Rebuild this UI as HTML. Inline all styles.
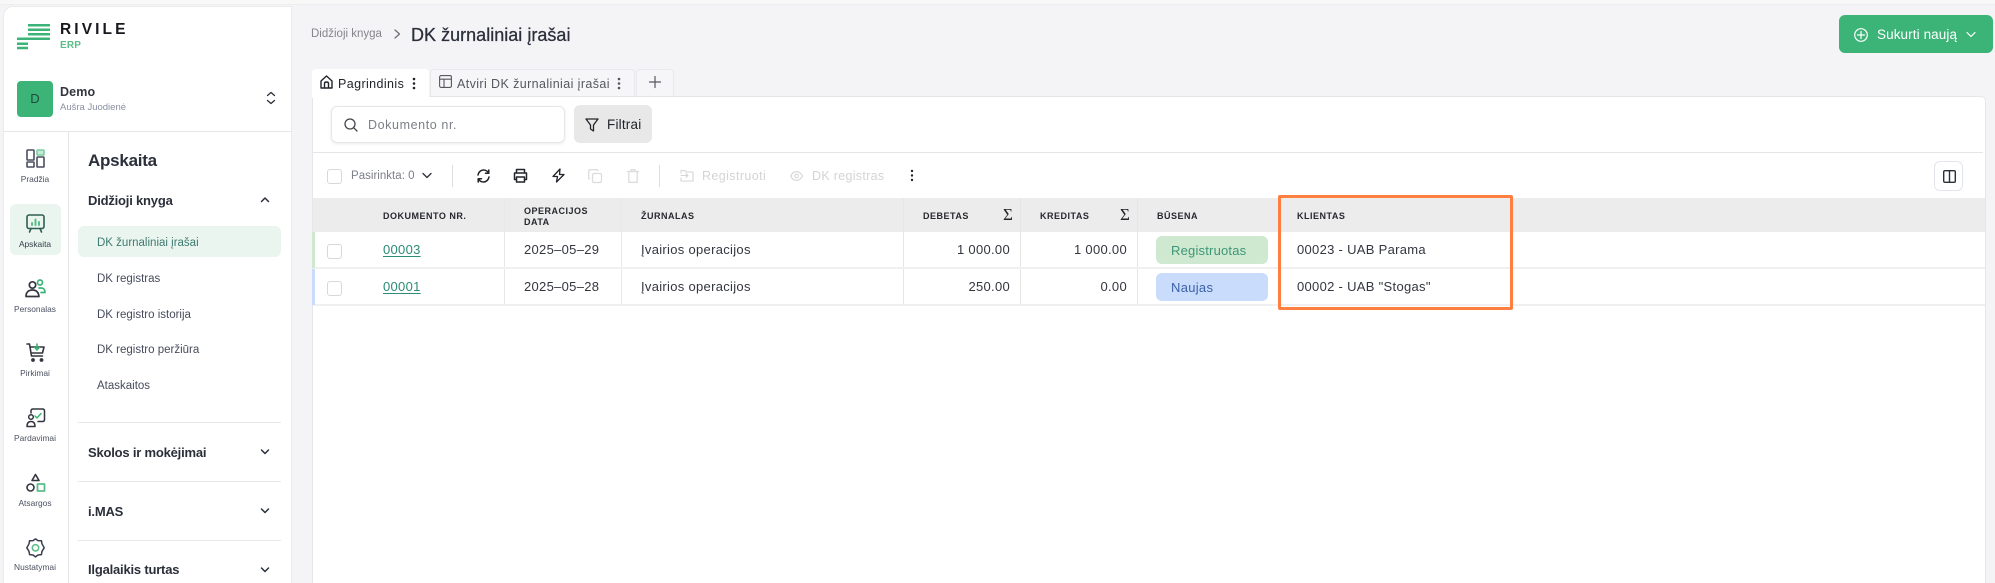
<!DOCTYPE html>
<html lang="lt"><head><meta charset="utf-8"><title>DK žurnaliniai įrašai</title>
<style>
html,body{margin:0;padding:0;width:1995px;height:583px;overflow:hidden;background:#f4f4f6}
body{position:relative;font-family:"Liberation Sans",sans-serif;color:#2b2f3a}
.b{position:absolute;box-sizing:border-box}
.t{position:absolute;white-space:nowrap;line-height:20px;height:20px;margin-top:-10px}
.c{transform:translateX(-50%);text-align:center}
.n{font-size:8.400px;color:#4b5060;margin-top:-9.500px}
.h{font-size:9px;font-weight:bold;letter-spacing:.5px;color:#26282e}
.m{font-size:13px;font-weight:bold;color:#2b2f3a;letter-spacing:-.2px}
.s{font-size:11.500px;color:#474b5c;letter-spacing:0}
.d{font-size:13px;color:#33363f;letter-spacing:.3px}
svg{position:absolute;overflow:visible;fill:none;stroke-linecap:round;stroke-linejoin:round}
</style></head><body>

<div class="b" style="left:0;top:0;width:1995px;height:5px;background:#f8f8f8;border-bottom:1px solid #eeeeee"></div>

<!-- sidebar -->
<div class="b" style="left:3px;top:6px;width:289px;height:590px;background:#fff;border:1px solid #ebebee;border-radius:10px 0 0 0"></div>
<div class="b" style="left:3px;top:131px;width:288px;height:1px;background:#e6e6e8"></div>
<div class="b" style="left:68px;top:131px;width:1px;height:452px;background:#e6e6e8"></div>

<!-- logo -->
<svg style="left:0;top:0;stroke-linecap:butt" width="60" height="60" stroke="#3cb478" stroke-width="2.500">
<path d="M28 25.200H50M28 29.800H50M28 34.300H50M17 38.800H50M17 43.700H28M17 48H28"/></svg>
<div class="t" style="left:60px;top:30px;font-size:15.500px;font-weight:bold;letter-spacing:3.100px;color:#17181c">RIVILE</div>
<div class="t" style="left:60px;top:46px;font-size:10px;font-weight:bold;letter-spacing:.2px;color:#5bbd8a">ERP</div>

<!-- org -->
<div class="b" style="left:17px;top:81px;width:36px;height:36px;background:#3cb478;border-radius:4px"></div>
<div class="t c" style="left:35px;top:99px;font-size:13px;color:#1f4a3c">D</div>
<div class="t" style="left:60px;top:92px;font-size:12.500px;font-weight:bold;letter-spacing:.15px;color:#33363f">Demo</div>
<div class="t" style="left:60px;top:108px;font-size:9.500px;color:#8a8fa3">Aušra Juodienė</div>
<svg style="left:265px;top:91px" width="12" height="14" stroke="#2b2f3a" stroke-width="1.300"><path d="M2.500 4.500L6 1.500L9.500 4.500M2.500 9.500L6 12.500L9.500 9.500"/></svg>

<!-- left rail -->
<div class="b" style="left:10px;top:204px;width:51px;height:51px;background:#eaf5ef;border-radius:6px"></div>
<svg style="left:26px;top:149px" width="19" height="19" stroke="#4a4e5e" stroke-width="1.600">
<rect x="1" y="1" width="7" height="10" rx=".8"/><rect x="1" y="13" width="7" height="5" rx=".8"/><rect x="11" y="8" width="7" height="10" rx=".8"/><rect x="11" y="1" width="7" height="5" rx=".8" stroke="#7bcf9f" fill="#c8ebd7"/></svg>
<div class="t c n" style="left:35px;top:178px">Pradžia</div>
<svg style="left:26px;top:214px" width="19" height="19" stroke="#2f5f52" stroke-width="1.600">
<rect x="1" y="1" width="17" height="13.500" rx="2"/><path d="M5 14.500L3.500 18M14 14.500L15.500 18"/><path d="M6 11V9M9.500 11V5.500M13 11V8" stroke="#5bbd8a" stroke-width="2"/></svg>
<div class="t c n" style="left:35px;top:243px;color:#33404a">Apskaita</div>
<svg style="left:25px;top:279px" width="21" height="19" stroke="#33363f" stroke-width="1.700">
<circle cx="7.500" cy="6" r="3.200"/><path d="M1 17.500C1 13 4 11 7.500 11S13.500 13 14 17.500Z"/><circle cx="15" cy="3.500" r="2.500" stroke="#3cb478"/><path d="M14 9H16.500C18.500 9 20 10.500 20 13.500H16" stroke="#3cb478"/></svg>
<div class="t c n" style="left:35px;top:308px">Personalas</div>
<svg style="left:26px;top:343px" width="20" height="19" stroke="#33363f" stroke-width="1.600">
<path d="M1 1H3.500L5.500 13H16.500M4 4H18L16.500 10H5"/><circle cx="7" cy="17" r="1.100" fill="#33363f"/><circle cx="15.500" cy="17" r="1.100" fill="#33363f"/><path d="M11 1V6.500M8.800 4.500L11 7L13.200 4.500" stroke="#3cb478"/></svg>
<div class="t c n" style="left:35px;top:372px">Pirkimai</div>
<svg style="left:26px;top:408px" width="20" height="20" stroke="#33363f" stroke-width="1.500">
<path d="M5 5V3C5 1.800 5.800 1 7 1H16.500C17.700 1 18.500 1.800 18.500 3V11.500C18.500 12.700 17.700 13.500 16.500 13.500H12"/><circle cx="5" cy="9" r="2.300"/><path d="M1 18.500C1 15 2.500 13.500 5 13.500S9 15 9 18.500Z"/><path d="M9 8L11 10L15 5.500" stroke="#3cb478"/></svg>
<div class="t c n" style="left:35px;top:437px">Pardavimai</div>
<svg style="left:26px;top:473px" width="20" height="20" stroke="#33363f" stroke-width="1.600">
<path d="M9.500 1.500L13 7.500H6Z"/><circle cx="4.500" cy="14.500" r="3.500"/><rect x="11.500" y="11" width="7" height="7" stroke="#5bbd8a" stroke-width="1.800"/></svg>
<div class="t c n" style="left:35px;top:502px">Atsargos</div>
<svg style="left:26px;top:538px" width="19" height="20" stroke="#3a3e4c" stroke-width="1.500">
<path d="M9.500 .9L12 2.600L15.400 2.700L16 5.800L18.200 9.800L16 13.300L15.400 16.600L12 17L9.500 18.900L7 17L3.600 16.600L3 13.300L.8 9.800L3 5.800L3.600 2.700L7 2.600Z"/><circle cx="9.500" cy="9.800" r="3.200" stroke="#5bbd8a"/></svg>
<div class="t c n" style="left:35px;top:566px">Nustatymai</div>

<!-- nav -->
<div class="t" style="left:88px;top:161px;font-size:17px;font-weight:bold;letter-spacing:-.25px;color:#2b2f3a">Apskaita</div>
<div class="t m" style="left:88px;top:201px">Didžioji knyga</div>
<svg style="left:260px;top:196px" width="10" height="8" stroke="#2b2f3a" stroke-width="1.500"><path d="M1.500 5.500L5 2L8.500 5.500"/></svg>
<div class="b" style="left:78px;top:226px;width:203px;height:31px;background:#eaf5ef;border-radius:6px"></div>
<div class="t s" style="left:97px;top:243px;color:#3f7a70">DK žurnaliniai įrašai</div>
<div class="t s" style="left:97px;top:279px">DK registras</div>
<div class="t s" style="left:97px;top:315px">DK registro istorija</div>
<div class="t s" style="left:97px;top:350px">DK registro peržiūra</div>
<div class="t s" style="left:97px;top:386px">Ataskaitos</div>
<div class="b" style="left:78px;top:422px;width:203px;height:1px;background:#e8e8ea"></div>
<div class="t m" style="left:88px;top:453px">Skolos ir mokėjimai</div>
<svg style="left:260px;top:448px" width="10" height="8" stroke="#2b2f3a" stroke-width="1.500"><path d="M1.500 2L5 5.500L8.500 2"/></svg>
<div class="b" style="left:78px;top:481px;width:203px;height:1px;background:#e8e8ea"></div>
<div class="t m" style="left:88px;top:512px">i.MAS</div>
<svg style="left:260px;top:507px" width="10" height="8" stroke="#2b2f3a" stroke-width="1.500"><path d="M1.500 2L5 5.500L8.500 2"/></svg>
<div class="b" style="left:78px;top:540px;width:203px;height:1px;background:#e8e8ea"></div>
<div class="t m" style="left:88px;top:570px">Ilgalaikis turtas</div>
<svg style="left:260px;top:566px" width="10" height="8" stroke="#2b2f3a" stroke-width="1.500"><path d="M1.500 2L5 5.500L8.500 2"/></svg>

<!-- header -->
<div class="t" style="left:311px;top:34px;font-size:11.500px;letter-spacing:0;color:#85868c">Didžioji knyga</div>
<svg style="left:393px;top:28px" width="9" height="12" stroke="#6f7076" stroke-width="1.300"><path d="M2 2L6.500 6L2 10"/></svg>
<div class="t" style="left:411px;top:35px;font-size:18px;letter-spacing:.02px;color:#2b2f3a;-webkit-text-stroke:.25px #2b2f3a">DK žurnaliniai įrašai</div>

<div class="b" style="left:1839px;top:15px;width:154px;height:38px;background:#3cb478;border-radius:6px"></div>
<svg style="left:1854px;top:28px" width="14" height="14" stroke="#fff" stroke-width="1.200"><circle cx="7" cy="7" r="6.300"/><path d="M7 3.500V10.500M3.500 7H10.500"/></svg>
<div class="t" style="left:1877px;top:35px;font-size:13.500px;letter-spacing:.1px;color:#fff">Sukurti naują</div>
<svg style="left:1966px;top:31px" width="10" height="8" stroke="#fff" stroke-width="1.200"><path d="M1 1.500L5 5.500L9 1.500"/></svg>

<!-- tabs -->
<div class="b" style="left:430px;top:69px;width:205px;height:28px;background:#f6f6f8;border:1px solid #e9e9ed;border-bottom:0;border-radius:4px 4px 0 0"></div>
<div class="b" style="left:636px;top:69px;width:38px;height:28px;background:#f6f6f8;border:1px solid #e9e9ed;border-bottom:0;border-radius:4px 4px 0 0"></div>

<!-- panel -->
<div class="b" style="left:312px;top:96px;width:1674px;height:490px;background:#fff;border:1px solid #e6e6ea;border-radius:0 5px 0 0"></div>
<div class="b" style="left:312px;top:69px;width:117px;height:29px;background:#fff;border-radius:4px 4px 0 0"></div>

<svg style="left:320px;top:75px" width="13" height="14" stroke="#22242a" stroke-width="1.400"><path d="M1 6L6.500 1L12 6V13H1ZM4.500 13V8.500C4.500 7.500 5.300 7 6.500 7S8.500 7.500 8.500 8.500V13"/></svg>
<div class="t" style="left:338px;top:84px;font-size:12.500px;letter-spacing:.4px;color:#22242a">Pagrindinis</div>
<svg style="left:412px;top:77px" width="4" height="13"><circle cx="2" cy="2" r="1.300" fill="#22242a"/><circle cx="2" cy="6.500" r="1.300" fill="#22242a"/><circle cx="2" cy="11" r="1.300" fill="#22242a"/></svg>
<svg style="left:439px;top:75px" width="13" height="13" stroke="#55585f" stroke-width="1.100"><rect x=".6" y=".6" width="11.800" height="11.800" rx="1.500"/><path d="M.6 4.200H12.400M5 4.200V12.400"/></svg>
<div class="t" style="left:457px;top:84px;font-size:12.500px;letter-spacing:.4px;color:#55585f">Atviri DK žurnaliniai įrašai</div>
<svg style="left:617px;top:77px" width="4" height="13"><circle cx="2" cy="2" r="1.300" fill="#55585f"/><circle cx="2" cy="6.500" r="1.300" fill="#55585f"/><circle cx="2" cy="11" r="1.300" fill="#55585f"/></svg>
<svg style="left:649px;top:76px" width="12" height="12" stroke="#55585f" stroke-width="1.200"><path d="M6 .5V11.500M.5 6H11.500"/></svg>

<!-- search -->
<div class="b" style="left:331px;top:106px;width:234px;height:37px;background:#fff;border:1px solid #e6e6ea;border-radius:6px;box-shadow:0 1px 3px rgba(0,0,0,.08)"></div>
<svg style="left:344px;top:118px" width="14" height="14" stroke="#43464f" stroke-width="1.300"><circle cx="6" cy="6" r="5"/><path d="M9.800 9.800L13 13"/></svg>
<div class="t" style="left:368px;top:125px;font-size:12.500px;letter-spacing:.6px;color:#7c7f88">Dokumento nr.</div>
<div class="b" style="left:574px;top:105px;width:78px;height:38px;background:#e8e8e8;border-radius:6px"></div>
<svg style="left:585px;top:118px" width="14" height="14" stroke="#22242a" stroke-width="1.300"><path d="M1 1H13L8.500 7V13L5.500 11V7Z"/></svg>
<div class="t" style="left:607px;top:125px;font-size:13.500px;letter-spacing:.2px;color:#22242a">Filtrai</div>

<div class="b" style="left:313px;top:152px;width:1670px;height:1px;background:#e6e6ea"></div>

<!-- toolbar -->
<div class="b" style="left:327px;top:169px;width:15px;height:15px;border:1px solid #d8d8dc;border-radius:3px;background:#fff"></div>
<div class="t" style="left:351px;top:176px;font-size:11.500px;letter-spacing:.02px;color:#7c7f88">Pasirinkta: 0</div>
<svg style="left:422px;top:172px" width="10" height="8" stroke="#33363f" stroke-width="1.400"><path d="M1 1.500L5 5.500L9 1.500"/></svg>
<div class="b" style="left:452px;top:165px;width:1px;height:22px;background:#dedee0"></div>
<svg style="left:476px;top:169px" width="15" height="14" stroke="#22242a" stroke-width="1.500"><path d="M2 6C2.500 3 5 1 7.500 1C9.700 1 11.500 2.200 12.500 4M13 8C12.500 11 10 13 7.500 13C5.300 13 3.500 11.800 2.500 10M12.800 1V4.300H9.500M2.200 13V9.700H5.500"/></svg>
<svg style="left:513px;top:168px" width="15" height="15" stroke="#22242a" stroke-width="1.500"><path d="M3.500 5V1.500H11.500V5M3.500 11.500H1.500V5H13.500V11.500H11.500"/><rect x="3.500" y="9" width="8" height="5"/></svg>
<svg style="left:552px;top:168px" width="13" height="15" stroke="#22242a" stroke-width="1.300"><path d="M8 1L1 8.500H5.500L4.500 14L12 6.500H7.500Z"/></svg>
<svg style="left:588px;top:169px" width="14" height="14" stroke="#dcdcdf" stroke-width="1.300"><rect x="4.500" y="4.500" width="9" height="9" rx="1.500"/><path d="M10 1.500C10 1 9.500 .7 9 .7H2C1.200 .7 .7 1.200 .7 2V9C.7 9.500 1 10 1.500 10"/></svg>
<svg style="left:627px;top:169px" width="12" height="14" stroke="#dcdcdf" stroke-width="1.300"><path d="M.5 2.500H11.500M4 2.500V.7H8V2.500M1.800 2.500V13.300H10.200V2.500"/></svg>
<div class="b" style="left:659px;top:165px;width:1px;height:22px;background:#dedee0"></div>
<svg style="left:680px;top:169px" width="14" height="13" stroke="#d6d6d9" stroke-width="1.100"><path d="M1 4V1.500H5L6.500 3H13V12H1V9M1 6.500H8M6 4.500L8 6.500L6 8.500"/></svg>
<div class="t" style="left:702px;top:176px;font-size:12.500px;letter-spacing:.4px;color:#d4d4d7">Registruoti</div>
<svg style="left:790px;top:171px" width="13" height="10" stroke="#d6d6d9" stroke-width="1.100"><path d="M.6 5C2 2 4 .7 6.500 .7S11 2 12.400 5C11 8 9 9.300 6.500 9.300S2 8 .6 5Z"/><circle cx="6.500" cy="5" r="1.800"/></svg>
<div class="t" style="left:812px;top:176px;font-size:12.500px;letter-spacing:.3px;color:#d4d4d7">DK registras</div>
<svg style="left:910px;top:169px" width="4" height="13"><circle cx="2" cy="2" r="1.200" fill="#22242a"/><circle cx="2" cy="6.500" r="1.200" fill="#22242a"/><circle cx="2" cy="11" r="1.200" fill="#22242a"/></svg>
<div class="b" style="left:1934px;top:161px;width:29px;height:30px;border:1px solid #e3e5ec;border-radius:6px;background:#fff"></div>
<svg style="left:1943px;top:170px" width="13" height="13" stroke="#2b2f3a" stroke-width="1.400"><rect x=".7" y=".7" width="11.600" height="11.600" rx="1.200"/><path d="M6.500 .7V12.300"/></svg>

<!-- table header -->
<div class="b" style="left:313px;top:198px;width:1672px;height:34px;background:#ececec"></div>
<div class="b" style="left:504px;top:198px;width:1px;height:108px;background:#e8e8e8"></div>
<div class="b" style="left:621px;top:198px;width:1px;height:108px;background:#e8e8e8"></div>
<div class="b" style="left:903px;top:198px;width:1px;height:108px;background:#e6e6e6"></div>
<div class="b" style="left:1020px;top:198px;width:1px;height:108px;background:#e6e6e6"></div>
<div class="b" style="left:1137px;top:198px;width:1px;height:108px;background:#e6e6e6"></div>
<div class="t h" style="left:383px;top:216px">DOKUMENTO NR.</div>
<div class="t h" style="left:524px;top:211px">OPERACIJOS</div>
<div class="t h" style="left:524px;top:222px">DATA</div>
<div class="t h" style="left:641px;top:216px">ŽURNALAS</div>
<div class="t h" style="left:923px;top:216px">DEBETAS</div>
<div class="t" style="left:1003px;top:215px;font-size:17px;color:#22242a;font-family:'Liberation Serif',serif">Σ</div>
<div class="t h" style="left:1040px;top:216px">KREDITAS</div>
<div class="t" style="left:1120px;top:215px;font-size:17px;color:#22242a;font-family:'Liberation Serif',serif">Σ</div>
<div class="t h" style="left:1157px;top:216px">BŪSENA</div>
<div class="t h" style="left:1297px;top:216px">KLIENTAS</div>

<!-- rows -->
<div class="b" style="left:313px;top:267px;width:1672px;height:2px;background:#f0f0f0"></div>
<div class="b" style="left:313px;top:304px;width:1672px;height:2px;background:#f0f0f0"></div>
<div class="b" style="left:312px;top:232px;width:3px;height:36px;background:#cfe9d0"></div>
<div class="b" style="left:312px;top:269px;width:3px;height:36px;background:#c9dcfb"></div>

<div class="b" style="left:327px;top:244px;width:15px;height:15px;border:1px solid #d8d8dc;border-radius:3px;background:#fff"></div>
<div class="t d" style="left:383px;top:250px;color:#2c8c74;text-decoration:underline;text-underline-offset:2px">00003</div>
<div class="t d" style="left:524px;top:250px">2025–05–29</div>
<div class="t d" style="left:641px;top:250px">Įvairios operacijos</div>
<div class="t d" style="right:985px;top:250px">1 000.00</div>
<div class="t d" style="right:868px;top:250px">1 000.00</div>
<div class="b" style="left:1156px;top:236px;width:112px;height:28px;background:#cfe9d0;border-radius:6px"></div>
<div class="t d" style="left:1171px;top:251px;color:#3d9678;letter-spacing:.2px">Registruotas</div>
<div class="t d" style="left:1297px;top:250px">00023 - UAB Parama</div>

<div class="b" style="left:327px;top:281px;width:15px;height:15px;border:1px solid #d8d8dc;border-radius:3px;background:#fff"></div>
<div class="t d" style="left:383px;top:287px;color:#2c8c74;text-decoration:underline;text-underline-offset:2px">00001</div>
<div class="t d" style="left:524px;top:287px">2025–05–28</div>
<div class="t d" style="left:641px;top:287px">Įvairios operacijos</div>
<div class="t d" style="right:985px;top:287px">250.00</div>
<div class="t d" style="right:868px;top:287px">0.00</div>
<div class="b" style="left:1156px;top:273px;width:112px;height:28px;background:#c9dcfb;border-radius:6px"></div>
<div class="t d" style="left:1171px;top:288px;color:#3a62a8">Naujas</div>
<div class="t d" style="left:1297px;top:287px">00002 - UAB "Stogas"</div>

<!-- highlight -->
<div class="b" style="left:1278px;top:195px;width:235px;height:115px;border:3px solid #ff7f41;border-radius:2px"></div>
</body></html>
